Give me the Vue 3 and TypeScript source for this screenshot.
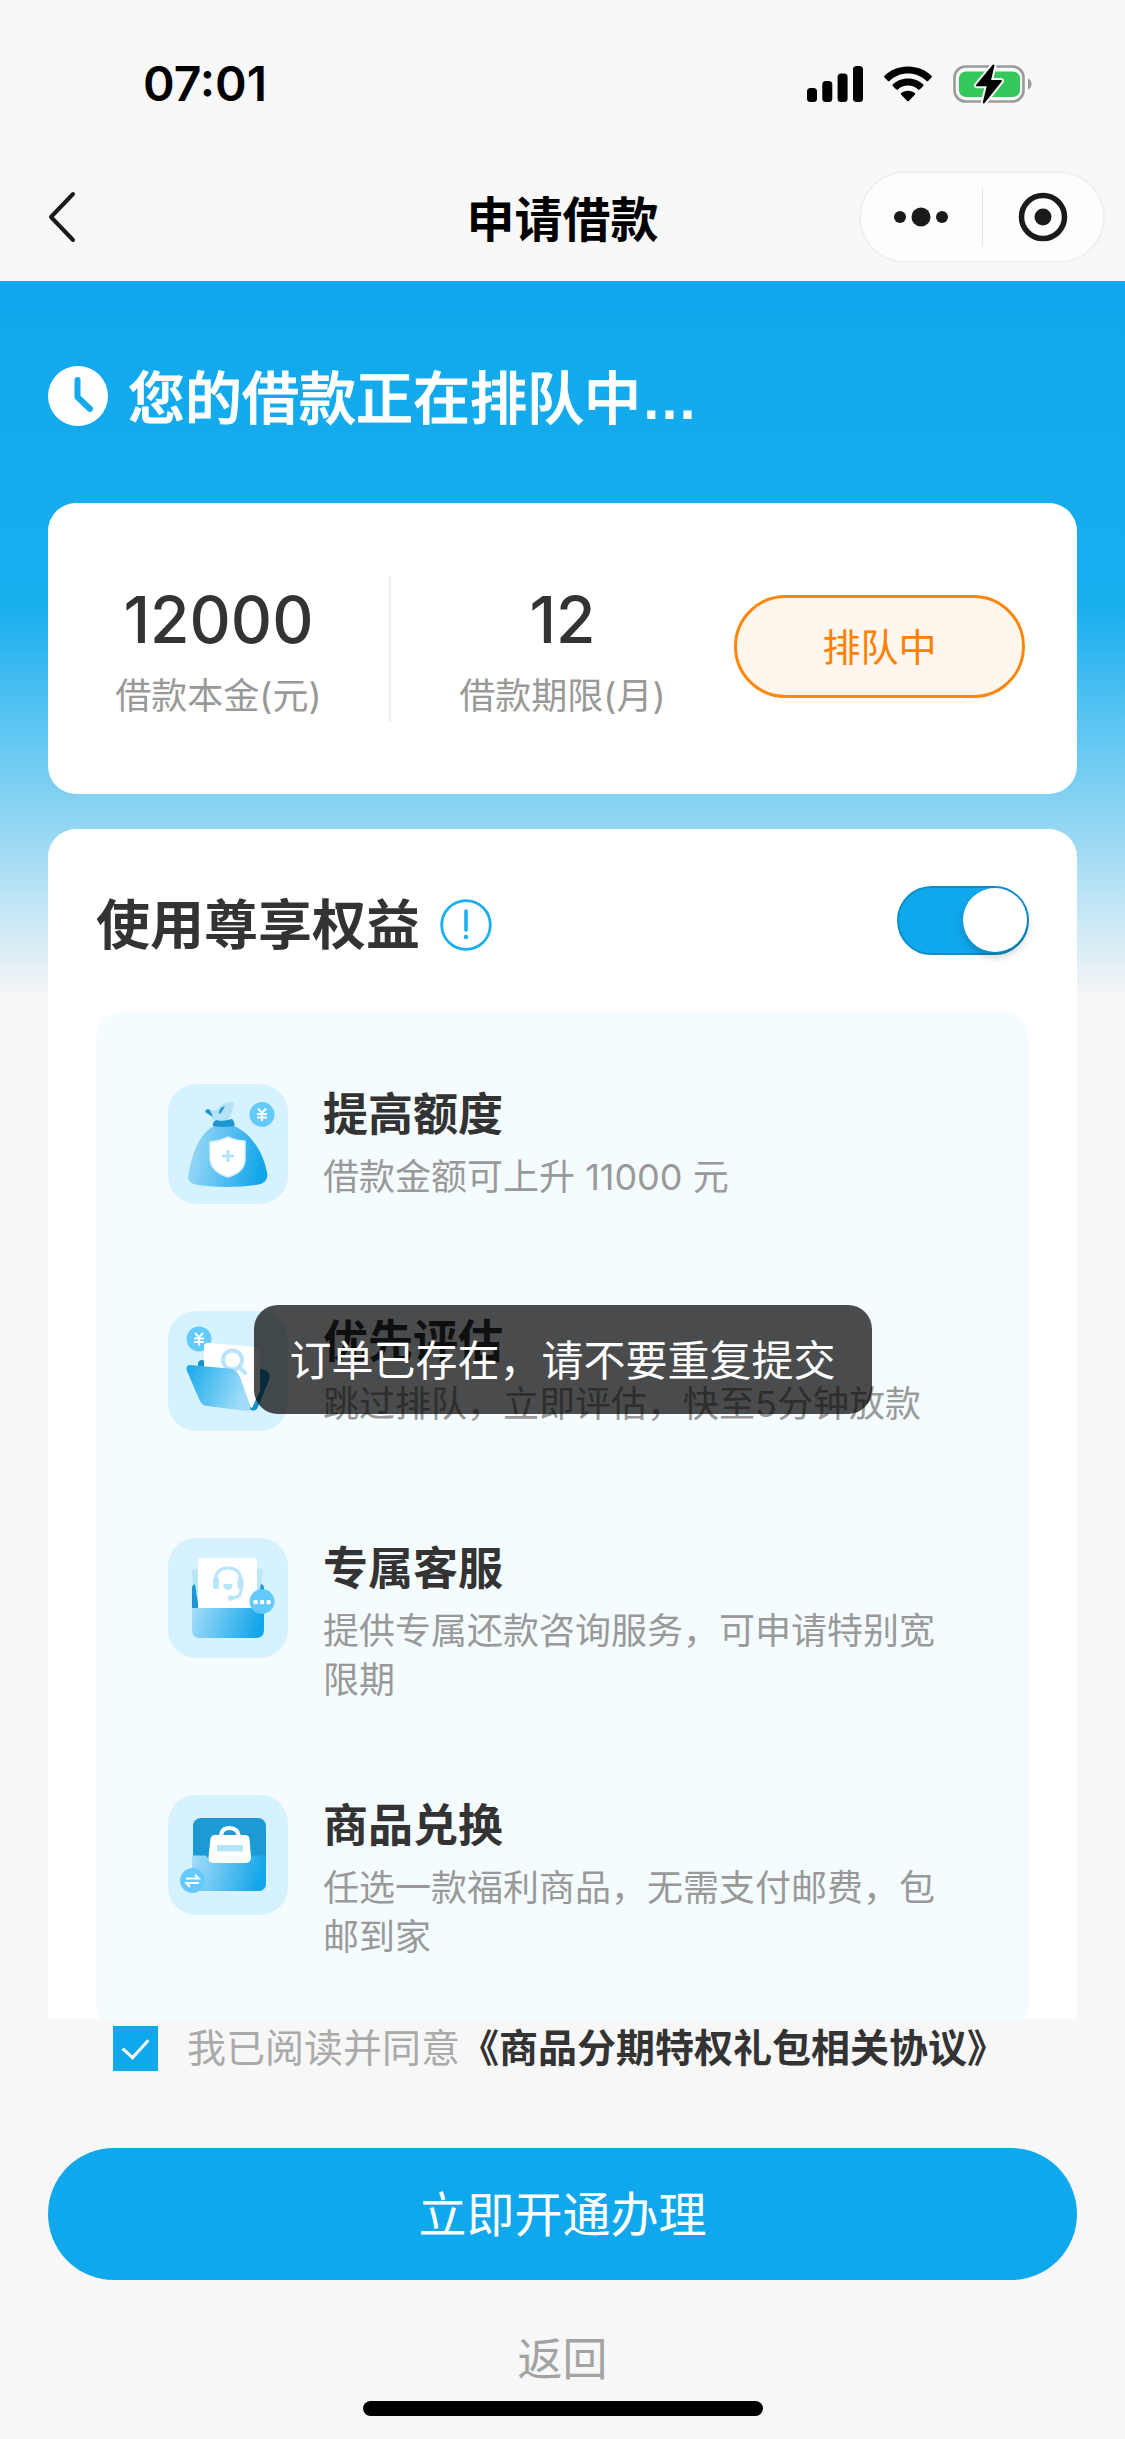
<script setup lang="ts">
import { ref } from 'vue'

interface Benefit {
  icon: 'bag' | 'folder' | 'service' | 'goods'
  title: string
  desc: string
}

const benefitsOn = ref(true)
const agreed = ref(true)
const toast = ref('订单已存在，请不要重复提交')

const benefits: Benefit[] = [
  { icon: 'bag', title: '提高额度', desc: '借款金额可上升 11000 元' },
  { icon: 'folder', title: '优先评估', desc: '跳过排队，立即评估，快至5分钟放款' },
  { icon: 'service', title: '专属客服', desc: '提供专属还款咨询服务，可申请特别宽限期' },
  { icon: 'goods', title: '商品兑换', desc: '任选一款福利商品，无需支付邮费，包邮到家' },
]
</script>

<template>
  <div class="page">
    <div class="status-bar">
      <span class="time">07:01</span>
      <div class="indicators">
        <svg width="56" height="36" viewBox="0 0 56 36" aria-hidden="true">
          <rect x="0" y="22" width="10" height="14" rx="3.5" />
          <rect x="15.3" y="15" width="10" height="21" rx="3.5" />
          <rect x="30.6" y="7.500" width="10" height="28.500" rx="3.5" />
          <rect x="46" y="0" width="10" height="36" rx="3.5" />
        </svg>
        <svg width="48" height="36" viewBox="0 0 48 36" aria-hidden="true">
          <path d="M24 0.500C33.500 0.500 41.800 4 47.500 9.800Q48.300 10.600 47.500 11.400L44 14.900Q43.200 15.600 42.400 14.900C37.600 10.300 31.100 7.600 24 7.600S10.400 10.300 5.600 14.900Q4.800 15.600 4 14.900L0.500 11.400Q-0.300 10.600 0.500 9.800C6.200 4 14.500 0.500 24 0.500Z" />
          <path d="M24 12.500C30 12.500 35.500 14.800 39.300 18.500Q40 19.300 39.300 20L35.700 23.500Q35 24.200 34.200 23.500C31.500 21.100 28 19.600 24 19.600S16.500 21.100 13.800 23.500Q13 24.200 12.300 23.500L8.700 20Q8 19.300 8.700 18.500C12.500 14.800 18 12.500 24 12.500Z" />
          <path d="M24 24.700C26.700 24.700 29.200 25.600 31 27.200Q31.700 27.900 31 28.600L24.800 35Q24 35.800 23.200 35L17 28.600Q16.300 27.900 17 27.200C18.800 25.600 21.300 24.700 24 24.700Z" />
        </svg>
        <svg width="80" height="40" viewBox="0 0 80 40" aria-hidden="true">
          <rect x="1.500" y="2.500" width="69" height="35" rx="11" fill="none" stroke="#9a9a9c" stroke-width="2.600" />
          <rect x="6" y="7.500" width="61" height="25.500" rx="7" fill="#34c759" />
          <path d="M75 14.500Q78.500 16 78.500 20T75 25.500Z" fill="#9a9a9c" />
          <path d="M40.500 1.500L24 21.300H35L30.800 38.500L48 17H36.800Z" fill="#000" stroke="#f8f8f8" stroke-width="6" stroke-linejoin="round" />
          <path d="M40.500 1.500L24 21.300H35L30.800 38.500L48 17H36.800Z" stroke="#000" stroke-width="2" stroke-linejoin="round" />
        </svg>
      </div>
    </div>

    <header class="nav">
      <button class="nav-back" type="button" aria-label="后退">
        <svg width="30" height="52" viewBox="0 0 30 52"><path d="M26 3L4 26L26 49" fill="none" stroke="#1a1a1a" stroke-width="4" stroke-linecap="round" stroke-linejoin="round" /></svg>
      </button>
      <h1 class="nav-title">申请借款</h1>
      <div class="capsule">
        <button type="button" aria-label="更多">
          <svg width="56" height="20" viewBox="0 0 56 20" fill="#1a1a1a"><circle cx="7" cy="10" r="6" /><circle cx="28" cy="10" r="9.500" /><circle cx="49" cy="10" r="6" /></svg>
        </button>
        <span class="capsule-line"></span>
        <button type="button" aria-label="关闭">
          <svg width="50" height="50" viewBox="0 0 50 50"><circle cx="25" cy="25" r="21.500" fill="none" stroke="#1a1a1a" stroke-width="5.500" /><circle cx="25" cy="25" r="8.500" fill="#1a1a1a" /></svg>
        </button>
      </div>
    </header>

    <main class="content">
      <h2 class="queue">
        <svg width="60" height="60" viewBox="0 0 60 60" aria-hidden="true">
          <circle cx="30" cy="30" r="30" fill="#fff" />
          <path d="M29.500 14V31L42 43" fill="none" stroke="#14aaed" stroke-width="6" stroke-linecap="round" stroke-linejoin="round" />
        </svg>
        <span>您的借款正在排队中<b>…</b></span>
      </h2>

      <section class="loan">
        <div class="figure">
          <strong>12000</strong>
          <span>借款本金(元)</span>
        </div>
        <div class="figure">
          <strong>12</strong>
          <span>借款期限(月)</span>
        </div>
        <div class="loan-state"><button type="button">排队中</button></div>
      </section>

      <section class="rights">
        <div class="rights-head">
          <h3>使用尊享权益</h3>
          <svg width="52" height="52" viewBox="0 0 52 52" aria-hidden="true">
            <circle cx="26" cy="26" r="24.300" fill="none" stroke="#1aaff3" stroke-width="2.800" />
            <path d="M26 12V31" stroke="#1aaff3" stroke-width="3.600" stroke-linecap="round" />
            <circle cx="26" cy="38" r="2.300" fill="#1aaff3" />
          </svg>
          <input v-model="benefitsOn" class="switch" type="checkbox" role="switch" aria-label="使用尊享权益" />
        </div>

        <ul class="benefits">
          <li v-for="item in benefits" :key="item.icon">
            <svg class="benefit-icon" viewBox="0 0 120 120" aria-hidden="true">
              <defs>
                <linearGradient id="fade-right" x1="0" y1="0" x2="1" y2="0.150">
                  <stop offset="0" stop-color="#a5def9" />
                  <stop offset="0.300" stop-color="#7accf4" />
                  <stop offset="1" stop-color="#13a6e9" />
                </linearGradient>
                <linearGradient id="fade-left" x1="0" y1="0" x2="1" y2="0.300">
                  <stop offset="0" stop-color="#17a9ea" />
                  <stop offset="1" stop-color="#a0dcf9" />
                </linearGradient>
              </defs>
              <rect width="120" height="120" rx="28" fill="#d7f2ff" />

              <g v-if="item.icon === 'bag'">
                <path d="M46 36L37 27Q38 23 43 26Q46 28 50 24Q55 17 66 18Q65 29 60 36Z" fill="#b4e2f7" />
                <path d="M37 28Q38 24 42 26L45 33ZM51 30Q51 23 57 22L53 29Z" fill="#1c98cf" />
                <path d="M46 42H66C84 50 96 69 99.500 91Q99 100 88 101Q59 105 29 101Q20 99 20 93C24 69 31 50 46 42Z" fill="url(#fade-right)" />
                <path d="M48 36Q54 38 64 35Q67 38 66.500 42Q56 44 45 42Q44 38 48 36Z" fill="#1c98cf" />
                <path d="M60 53Q68 57 77 57V75Q77 88 60 93Q43 88 42 75V58Q52 57 60 53Z" fill="#fff" stroke="#d5f0fd" stroke-width="1.500" />
                <path d="M60 66V78M54 72H66" stroke="#b5e4fa" stroke-width="3" />
                <circle cx="94" cy="30.500" r="12.500" fill="#62cafd" />
                <path d="M90 24.500L94 29L98 24.500M89 30H99M89 33.500H99M94 29V37" fill="none" stroke="#fff" stroke-width="2" />
              </g>

              <g v-else-if="item.icon === 'folder'">
                <path d="M30 55V52Q31 49 34 49L40 51L92 58Q104 59 101 69L90 96Q88 101 83 99Z" fill="#1591cd" />
                <circle cx="31" cy="28" r="12.500" fill="#62cafd" />
                <path d="M27 22L31 26.500L35 22M26 27.500H36M26 31H36M31 26.500V34.500" fill="none" stroke="#fff" stroke-width="2" />
                <path d="M36 35Q37 31 42 32L88 36Q92 37 92 41V80L84 97L60 80L36 58Z" fill="#fff" />
                <circle cx="64.500" cy="49" r="9.500" fill="#fff" stroke="#b8e5fb" stroke-width="4" />
                <path d="M71 56L77 62" stroke="#b8e5fb" stroke-width="4.500" stroke-linecap="round" />
                <path d="M22 54L61 57.500Q69 58 72 66L82 94Q84 100 78 100L39 95Q34 95 31 88L19 60Q17 54 22 54Z" fill="url(#fade-left)" />
              </g>

              <g v-else-if="item.icon === 'service'">
                <path d="M24 34Q25 30 30 31V55H25ZM95 34Q94 29 88 31V55H92Z" fill="#b9e6fa" />
                <path d="M24 50Q24 47 27 46L31 72H24ZM96 50Q96 47 93 46L88 72H96Z" fill="#1997d2" />
                <rect x="30" y="20" width="59" height="60" rx="3" fill="#fff" />
                <path d="M24 70H96V92Q96 100 88 100H32Q24 100 24 92Z" fill="url(#fade-right)" />
                <path d="M47.500 44V42Q48 30 60 30T73 42V52Q73 60 63 60" fill="none" stroke="#b9e5fa" stroke-width="3" />
                <rect x="45" y="40" width="6" height="11" rx="2" fill="#b9e5fa" />
                <rect x="69.500" y="40" width="6" height="11" rx="2" fill="#b9e5fa" />
                <path d="M55.500 46H64.500V48Q64 52 60 52T55.500 48Z" fill="#b9e5fa" />
                <circle cx="63" cy="60" r="2.800" fill="#b9e5fa" />
                <circle cx="94" cy="63.500" r="12.500" fill="#62cafd" />
                <g fill="#fff"><rect x="85.500" y="62" width="4.200" height="4.200" rx="1" /><rect x="92" y="62" width="4.200" height="4.200" rx="1" /><rect x="98.500" y="62" width="4.200" height="4.200" rx="1" /></g>
              </g>

              <g v-else>
                <rect x="25" y="23" width="73" height="73" rx="8" fill="#1b9ad3" />
                <path d="M24 60.500H38Q42 67 50 67H74Q82 67 84 60.500H98V88Q98 96 90 96H24Z" fill="url(#fade-right)" />
                <path d="M53 42Q53 33 61.500 33T71 42" fill="none" stroke="#fff" stroke-width="4" />
                <path d="M47 40H77Q81 40 81.500 44L83 62Q83 68 77 68H46Q40 68 40.500 62L42.500 44Q43 40 47 40Z" fill="#fff" />
                <rect x="49" y="50" width="26" height="6.500" rx="1" fill="#b5e4fa" />
                <circle cx="24.500" cy="85.500" r="12.500" fill="#62cafd" />
                <path d="M18 83.500H30.500L27 79.500M31 88H18.500L22 92" fill="none" stroke="#fff" stroke-width="2.200" />
              </g>
            </svg>
            <div class="benefit-text">
              <h4>{{ item.title }}</h4>
              <p>{{ item.desc }}</p>
            </div>
          </li>
        </ul>
      </section>
    </main>

    <footer class="footer">
      <div class="agree">
        <input id="agree" v-model="agreed" type="checkbox" />
        <label for="agree">我已阅读并同意</label>
        <a href="#">《商品分期特权礼包相关协议》</a>
      </div>
      <button class="primary" type="button">立即开通办理</button>
      <button class="secondary" type="button">返回</button>
      <div class="home-bar"></div>
    </footer>

    <div class="toast" role="status">{{ toast }}</div>
  </div>
</template>

<style>
body {
  margin: 0;
  background: #f7f7f7;
}
</style>

<style scoped>
.page {
  position: relative;
  display: flex;
  flex-direction: column;
  height: 100vh;
  overflow: hidden;
  background: #f7f7f7;
  color: #333;
  font-family: Inter, "Noto Sans CJK SC", sans-serif;
}
.page * {
  box-sizing: border-box;
}
h1, h2, h3, h4, p, ul {
  margin: 0;
  padding: 0;
}
button {
  padding: 0;
  border: 0;
  background: none;
  font-family: inherit;
}
svg {
  display: block;
  flex: none;
}

.status-bar {
  display: flex;
  align-items: center;
  justify-content: space-between;
  flex: none;
  height: 168px;
  padding: 0 92px 0 143px;
  background: #f8f8f8;
  color: #000;
}
.time {
  font-size: 48px;
  font-weight: 600;
  line-height: 60px;
}
.indicators {
  display: flex;
  align-items: center;
  gap: 21px;
}

.nav {
  display: grid;
  grid-template-columns: 1fr auto 1fr;
  align-items: center;
  flex: none;
  height: 113px;
  padding: 0 20px 15px;
  background: #f8f8f8;
}
.nav-back {
  justify-self: start;
  padding-left: 27px;
}
.nav-title {
  padding-top: 6px;
  color: #000;
  font-size: 48px;
  font-weight: 700;
  line-height: 60px;
}
.capsule {
  display: flex;
  align-items: center;
  justify-self: end;
  width: 246px;
  height: 92px;
  border: 2px solid #f0f0f0;
  border-radius: 46px;
  background: #fdfdfd;
}
.capsule button {
  display: flex;
  flex: 1;
  justify-content: center;
}
.capsule-line {
  width: 1px;
  height: 58px;
  background: #e2e2e2;
}

.content {
  display: flex;
  flex: 1 1 0;
  flex-direction: column;
  min-height: 0;
  overflow: hidden;
  padding: 0 48px;
  background: linear-gradient(#10a8ec 0%, #18afef 45%, #8fd5f3 75%, #f7f7f7 100%) 0 0 / 100% 718px no-repeat;
}
.queue {
  display: flex;
  align-items: center;
  gap: 20px;
  flex: none;
  height: 222px;
  padding-top: 8px;
  color: #fff;
  font-family: "Liberation Sans", "Noto Sans CJK SC", sans-serif;
  font-size: 57px;
  font-weight: 500;
  line-height: 72px;
}
.queue span {
  padding-top: 6px;
  -webkit-text-stroke: 1px #fff;
}
.queue b {
  -webkit-text-stroke: 0;
}
.loan {
  display: grid;
  grid-template-columns: repeat(3, 1fr);
  align-items: center;
  flex: none;
  min-height: 291px;
  margin-bottom: 35px;
  border-radius: 28px;
  background: #fff;
}
.figure {
  display: flex;
  flex-direction: column;
  align-items: center;
  justify-content: center;
  gap: 16px;
  height: 147px;
  padding-top: 8px;
}
.figure:first-child {
  border-right: 2px solid #eee;
}
.figure strong {
  font-size: 64px;
  font-weight: 500;
  line-height: 72px;
}
.figure span {
  color: #999;
  font-size: 36px;
  line-height: 49px;
}
.loan-state {
  padding: 0 52px 4px 0;
}
.loan-state button {
  display: block;
  width: 100%;
  height: 103px;
  padding-bottom: 4px;
  border: 3px solid #ff860d;
  border-radius: 52px;
  background: #fff6ed;
  color: #ff8000;
  font-size: 38px;
}

.rights {
  flex: none;
  padding: 0 48px 48px;
  border-radius: 28px;
  background: #fff;
}
.rights-head {
  display: flex;
  align-items: center;
  height: 182px;
}
.rights-head h3 {
  margin-right: 20px;
  padding-top: 12px;
  font-size: 54px;
  font-weight: 700;
  line-height: 72px;
}
.rights-head svg {
  margin-top: 10px;
}
.switch {
  appearance: none;
  width: 132px;
  height: 69px;
  margin: 0 0 0 auto;
  border: 2px solid #0f8dc9;
  border-radius: 35px;
  background: #10a8ec;
}
.switch::before {
  content: "";
  display: block;
  width: 64px;
  height: 64px;
  border-radius: 50%;
  background: #fff;
  box-shadow: 0 5px 8px rgba(0, 0, 0, 0.2);
}
.switch:checked::before {
  margin-left: 64px;
}
.switch:not(:checked) {
  border-color: #ddd;
  background: #ddd;
}

.benefits {
  display: flex;
  flex-direction: column;
  gap: 90px;
  padding: 73px 71px 69px 72px;
  border-radius: 28px;
  background: #f4fcff;
  list-style: none;
}
.benefits li {
  display: flex;
  gap: 35px;
  min-height: 137px;
}
.benefit-icon {
  width: 120px;
  height: 120px;
}
.benefit-text {
  flex: 1;
}
.benefit-text h4 {
  margin-bottom: 7px;
  font-size: 45px;
  font-weight: 700;
  line-height: 62px;
}
.benefit-text p {
  color: #999;
  font-size: 36px;
  line-height: 49px;
}

.footer {
  display: flex;
  flex: none;
  flex-direction: column;
  padding: 0 48px 23px;
}
.agree {
  display: flex;
  align-items: center;
  height: 58px;
  margin-bottom: 71px;
  padding-left: 65px;
  font-size: 39px;
  line-height: 58px;
}
.agree input {
  appearance: none;
  display: grid;
  place-items: center;
  width: 45px;
  height: 45px;
  margin: 0 29px 0 0;
  border: 2px solid #10a8ec;
  background: #fff;
}
.agree input:checked {
  background: #10a8ec;
}
.agree input:checked::before {
  content: "";
  width: 12px;
  height: 22px;
  margin-bottom: 6px;
  border: solid #fff;
  border-width: 0 3px 3px 0;
  transform: rotate(42deg);
}
.agree label {
  color: #aaa;
}
.agree a {
  color: #333;
  font-weight: 700;
  text-decoration: none;
}
.primary {
  height: 132px;
  padding-bottom: 6px;
  border-radius: 66px;
  background: #10a8ec;
  color: #fff;
  font-size: 48px;
}
.secondary {
  align-self: center;
  margin: 48px 0 10px;
  color: #a3a3a3;
  font-size: 45px;
  line-height: 63px;
}
.home-bar {
  align-self: center;
  width: 400px;
  height: 15px;
  border-radius: 8px;
  background: #000;
}

.toast {
  position: absolute;
  top: 1305px;
  left: 50%;
  padding: 25px 36px 23px;
  border-radius: 24px;
  background: rgba(0, 0, 0, 0.7);
  color: #fff;
  font-size: 42px;
  line-height: 61px;
  white-space: nowrap;
  transform: translateX(-50%);
}
</style>
